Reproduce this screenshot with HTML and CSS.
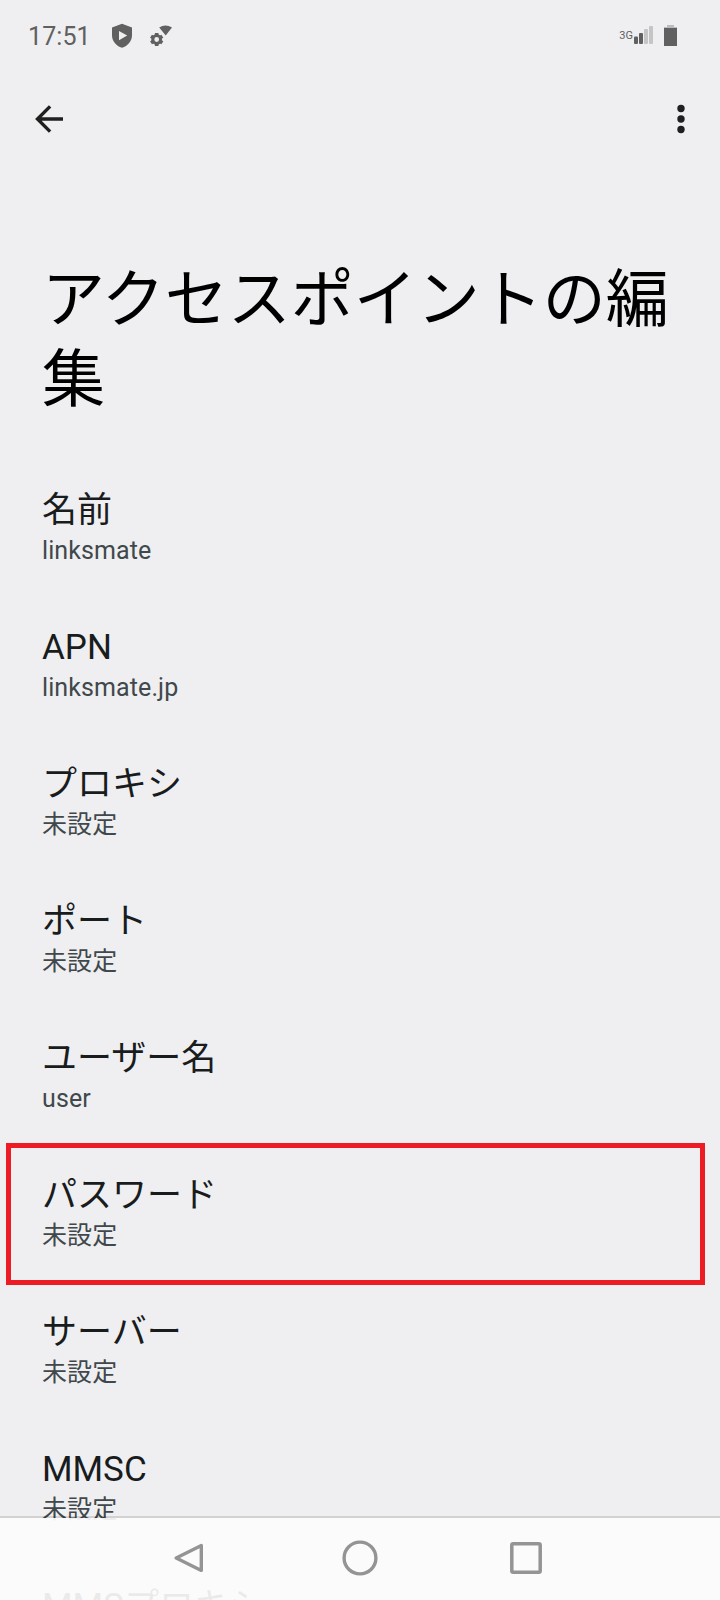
FILE: index.html
```html
<!DOCTYPE html>
<html lang="ja">
<head>
<meta charset="utf-8">
<title>アクセスポイントの編集</title>
<link rel="stylesheet" href="styles.css">
</head>
<body>
<div class="screen">
  <header class="status">
    <span class="clock">17:51</span>
    <svg class="shield" width="22" height="26" viewBox="0 0 22 26"><path fill="#606061" fill-rule="evenodd" d="M11 .7 21 4.500v7.700c0 6-4.200 10.700-10 12.500C5.200 22.900 1 18.200 1 12.200V4.500zM8 8v9.200l8.200-4.600z"/></svg>
    <svg class="netgear" width="24" height="24" viewBox="0 0 24 24"><path fill="#606061" d="M10.200 3.600Q16.500-.4 23 3.600L16.700 11.600z"/><g fill="none" stroke="#606061"><circle cx="7.700" cy="15.500" r="3.900" stroke-width="3"/><path stroke-width="3.600" d="M7.700 9v2.200M7.700 19.800V22M2 12.200l2 1.200M11.400 17.600l2 1.200M2 18.800l2-1.200M11.400 13.400l2-1.200"/></g></svg>
    <span class="net">3G</span>
    <svg class="signal" width="20" height="20" viewBox="0 0 20 20"><rect x="0" y="11.500" width="4" height="7.500" rx="1" fill="#606061"/><rect x="5" y="8" width="4" height="11" rx="1" fill="#606061"/><rect x="10" y="4" width="4" height="15" rx="1" fill="#c5c5c6"/><rect x="15" y="1" width="4" height="18" rx="1" fill="#c5c5c6"/></svg>
    <svg class="battery" width="13" height="21" viewBox="0 0 13 21"><path fill="#bcbcbd" d="M3 0h7v2h3v2H0V2h3z"/><path fill="#606061" d="M0 3h13v18H0z"/></svg>
  </header>
  <nav class="toolbar">
    <svg width="28" height="28" viewBox="0 0 28 28"><path fill="none" stroke="#1f1f1f" stroke-width="3.400" d="M15.100 1.400 2.500 14l12.600 12.600M2.500 14H28"/></svg>
    <svg width="8" height="30" viewBox="0 0 8 30"><g fill="#1f1f1f"><circle cx="4" cy="4.500" r="3.700"/><circle cx="4" cy="15" r="3.700"/><circle cx="4" cy="25.500" r="3.700"/></g></svg>
  </nav>
  <h1 class="title">アクセスポイントの編集</h1>
  <main class="list">
    <section class="item"><h2 class="label">名前</h2><p class="value">linksmate</p></section>
    <section class="item"><h2 class="label">APN</h2><p class="value">linksmate.jp</p></section>
    <section class="item"><h2 class="label">プロキシ</h2><p class="value">未設定</p></section>
    <section class="item"><h2 class="label">ポート</h2><p class="value">未設定</p></section>
    <section class="item"><h2 class="label">ユーザー名</h2><p class="value">user</p></section>
    <section class="item marked"><h2 class="label">パスワード</h2><p class="value">未設定</p></section>
    <section class="item"><h2 class="label">サーバー</h2><p class="value">未設定</p></section>
    <section class="item"><h2 class="label">MMSC</h2><p class="value">未設定</p></section>
    <section class="item"><h2 class="label">MMSプロキシ</h2></section>
  </main>
  <footer class="navbar">
    <svg width="30" height="30" viewBox="0 0 30 30"><path fill="none" stroke="#949494" stroke-width="3.400" stroke-linejoin="round" d="M27.300 2.600v24.800L2.200 15z"/></svg>
    <svg class="home" width="36" height="36" viewBox="0 0 36 36"><circle cx="18" cy="18" r="15.900" fill="none" stroke="#949494" stroke-width="3.400"/></svg>
    <svg width="32" height="32" viewBox="0 0 32 32"><rect x="1.800" y="1.800" width="28.400" height="28.400" rx="1.500" fill="none" stroke="#949494" stroke-width="3.500"/></svg>
  </footer>
</div>
</body>
</html>
```
FILE: styles.css
```css
*, *::after { box-sizing: border-box; }
body { margin: 0; background: #efeff1; font-family: Roboto, "Noto Sans CJK JP", sans-serif; }
h1, h2, p { margin: 0; font-weight: 400; }
svg { display: block; flex: none; }

.screen { position: relative; width: 720px; height: 1600px; overflow: hidden; background: #efeff1; }

.status { display: flex; align-items: center; height: 70px; padding: 0 43px 0 28px; color: #606061; }
.clock { width: 83px; padding-top: 3px; font-size: 25px; line-height: 30px; letter-spacing: .1px; }
.shield, .netgear { margin-top: 1px; }
.netgear { margin-left: 16px; }
.net { margin-left: auto; margin-right: 1px; padding-top: 1px; font-size: 11px; line-height: 14px; }
.battery { margin-left: 10px; }

.toolbar { display: flex; justify-content: space-between; align-items: center; height: 98px; padding: 0 35px; }

.title { height: 310px; padding: 92px 0 0 42px; font-size: 63px; line-height: 80px; color: #000; }

.list { display: flex; flex-direction: column; }
.item { height: 137px; padding: 12px 42px 0; }
.label { height: 44px; font-size: 35px; line-height: 41px; color: #191c1d; }
.value { height: 34px; font-size: 25px; line-height: 34px; letter-spacing: .1px; color: #40484b; }

.marked { position: relative; }
.marked::after { content: ""; position: absolute; left: 6px; top: -20px; width: 699px; height: 142px; border: 5px solid #ed1c24; }

.navbar {
  position: absolute; left: 0; right: 0; bottom: 0; height: 84px;
  display: flex; justify-content: space-between; align-items: center;
  padding: 0 178px 2px 174px; border-top: 2px solid rgba(0, 0, 0, .12);
  background: rgba(252, 252, 252, .92); background-clip: padding-box;
}
.home { margin-left: 6px; }
```
